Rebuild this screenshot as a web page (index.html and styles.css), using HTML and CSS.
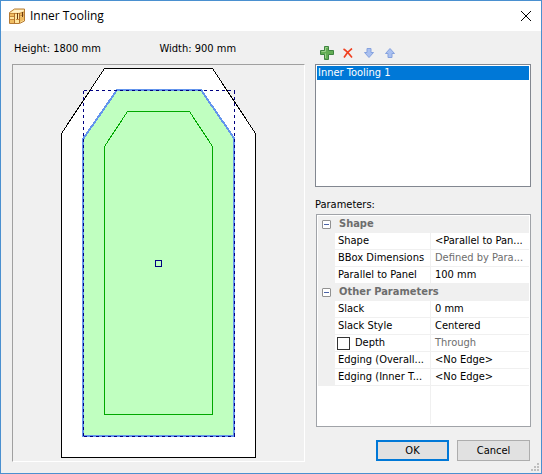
FILE: index.html
```html
<!DOCTYPE html>
<html lang="en">
<head>
<meta charset="utf-8">
<title>Inner Tooling</title>
<link rel="stylesheet" href="styles.css">
</head>
<body>
<header class="titlebar">
  <svg class="app-icon" width="16" height="16" viewBox="0 0 16 16" aria-hidden="true">
    <path d="M.5 4.500 5.500 1h10v12l-5 2.500H.5z" fill="#ffe6a0" stroke="#b57a34"/>
    <path d="M1 5h4v3H1zM1 12h4v3H1z" fill="#f0bd62"/>
    <path d="M11 5l4-1v3l-4 1zM11 9l4-1v4l-4 2z" fill="#eebb62"/>
    <path d="M2 4.500l4-2.500h9l-4 2.500z" fill="#fff0c8"/>
    <path d="M1 5.500h9l5-1.500M1 8.500h4M1 11.500h4M11 8l4-1M7 11.500h3" fill="none" stroke="#c68a3c"/>
    <path d="M5.500 5v10M10.500 5v10" stroke="#b06f2a"/>
    <path d="M8.500 5v6M13.500 4v5" stroke="#6b3c14"/>
  </svg>
  <h1 class="title">Inner Tooling</h1>
  <button class="close" type="button" aria-label="Close">
    <svg width="10" height="10" viewBox="0 0 10 10"><path d="M0 0 10 10M10 0 0 10" stroke="#000"/></svg>
  </button>
</header>
<main class="content">
  <section class="preview">
    <div class="sizes"><span>Height: 1800 mm</span><span>Width: 900 mm</span></div>
    <div class="canvas">
      <svg class="drawing" viewBox="13 65 291 396" role="img" aria-label="Panel preview">
        <g shape-rendering="crispEdges">
          <path d="M61.500 457.500V133.500L104.500 68.500H212.500L255.500 133.500V457.500Z" fill="#fff" stroke="#000"/>
          <path d="M83 436V139L117 90H201L234 138V436Z" fill="#c0ffc0" stroke="#6495ed" stroke-width="2"/>
          <path d="M104.500 414.500V146.500L127.500 111.500H189.500L212.500 146.500V414.500Z" fill="none" stroke="#00a800"/>
          <path d="M83.500 90.500H234.500M83.500 90.500V436.500M234.500 90.500V436.500M83.500 436.500H234.500" fill="none" stroke="#000080" stroke-dasharray="3 3"/>
          <rect x="155.500" y="260.500" width="6" height="6" fill="none" stroke="#000080"/>
        </g>
      </svg>
    </div>
  </section>
  <section class="side">
    <div class="toolbar">
      <button type="button" aria-label="Add">
        <svg width="14" height="14" viewBox="0 0 14 14"><path d="M4.500 .5h4v4h5v4h-5v5h-4v-5h-4v-4h4z" fill="#63ad55" stroke="#3f8440"/><path d="M5.500 12V7.500M1.500 5.500h4v-4h2" fill="none" stroke="#9ed28c"/></svg>
      </button>
      <button type="button" aria-label="Delete">
        <svg width="10" height="10" viewBox="0 0 10 10"><path d="M.5 1Q4 3 9 9.500M9 .5Q4 4 1 9.500" fill="none" stroke="#f04020" stroke-width="1.600"/></svg>
      </button>
      <button type="button" aria-label="Move down">
        <svg width="10" height="10" viewBox="0 0 10 10"><path d="M3 .5h4v4h2.500L5 9.500.5 4.500H3z" fill="#a9c0f0" stroke="#86a2de"/></svg>
      </button>
      <button type="button" aria-label="Move up">
        <svg width="10" height="10" viewBox="0 0 10 10"><path d="M3 9.500h4v-4h2.500L5 .5.5 5.500H3z" fill="#a9c0f0" stroke="#86a2de"/></svg>
      </button>
    </div>
    <select class="list" size="7" aria-label="Inner toolings"><option selected>Inner Tooling 1</option></select>
    <h2 class="caption" id="params">Parameters:</h2>
    <div class="grid">
      <table aria-labelledby="params">
        <colgroup><col class="c-gutter"><col class="c-name"><col></colgroup>
        <tbody>
          <tr class="group"><td><button class="toggle" type="button" aria-label="Collapse Shape"></button></td><th colspan="2">Shape</th></tr>
          <tr><td></td><th>Shape</th><td>&lt;Parallel to Pan...</td></tr>
          <tr><td></td><th>BBox Dimensions</th><td class="muted">Defined by Para...</td></tr>
          <tr><td></td><th>Parallel to Panel</th><td>100 mm</td></tr>
          <tr class="group"><td><button class="toggle" type="button" aria-label="Collapse Other Parameters"></button></td><th colspan="2">Other Parameters</th></tr>
          <tr><td></td><th>Slack</th><td>0 mm</td></tr>
          <tr><td></td><th>Slack Style</th><td>Centered</td></tr>
          <tr><td></td><th class="checkable"><label><input type="checkbox">Depth</label></th><td class="muted">Through</td></tr>
          <tr><td></td><th>Edging (Overall...</th><td>&lt;No Edge&gt;</td></tr>
          <tr><td></td><th>Edging (Inner T...</th><td>&lt;No Edge&gt;</td></tr>
          <tr class="rest"><td></td><th></th><td></td></tr>
        </tbody>
      </table>
    </div>
    <div class="actions">
      <button class="btn default" type="button">OK</button>
      <button class="btn" type="button">Cancel</button>
    </div>
  </section>
</main>
<svg class="grip" width="8" height="8" viewBox="0 0 8 8" aria-hidden="true"><path d="M6 0h2v2H6zM3 3h2v2H3zM6 3h2v2H6zM0 6h2v2H0zM3 6h2v2H3zM6 6h2v2H6z" fill="#bfbfbf"/></svg>
</body>
</html>
```
FILE: styles.css
```css
* { box-sizing: border-box; }

body {
  margin: 0;
  min-height: 100vh;
  display: flex;
  flex-direction: column;
  position: relative;
  border: 1px solid #4a90d0;
  background: #f0f0f0;
  color: #000;
  font: 11px/16px "DejaVu Sans Condensed", "DejaVu Sans", sans-serif;
}

button, select, input { font: inherit; color: inherit; margin: 0; }
svg { display: block; }

.titlebar {
  display: flex;
  align-items: center;
  height: 30px;
  padding: 0 10px 0 8px;
  background: #fff;
}
.title {
  flex: 1;
  margin: 0 0 0 5px;
  font: 12px/16px "Open Sans", sans-serif;
}
.close, .toolbar button {
  display: flex;
  padding: 0;
  border: 0;
  background: none;
}

.content {
  flex: 1;
  display: grid;
  grid-template-columns: 293fr 216fr;
  gap: 10px;
  padding: 0 10px 11px 11px;
}
.preview, .side {
  display: flex;
  flex-direction: column;
  min-width: 0;
}

.sizes {
  display: grid;
  grid-template-columns: 1fr 1fr;
  height: 33px;
  padding: 10px 0 0 2px;
}
.canvas {
  flex: 1;
  border: 1px solid #a0a0a0;
  border-right-color: #fff;
  border-bottom-color: #fff;
}
.drawing { width: 100%; height: 100%; }

.toolbar {
  display: flex;
  align-items: center;
  gap: 11px;
  height: 33px;
  padding: 10px 0 0 5px;
}
.toolbar button:first-child { margin-right: -2px; }

.list {
  height: 123px;
  padding: 1px;
  border: 1px solid #828790;
  border-radius: 0;
  background: #fff;
  outline: 0;
  overflow: hidden;
}
.list option {
  min-height: 14px;
  padding: 0 1px;
  line-height: 14px;
}
.list option:checked {
  background: #0078d7 linear-gradient(#0078d7, #0078d7);
  color: #fff;
}

.caption {
  height: 27px;
  margin: 0;
  padding-top: 10px;
  font: inherit;
}

.grid {
  flex: 1;
  margin-left: 1px;
  padding: 1px;
  border: 1px solid #a0a3a8;
  background: #fff;
}
table {
  width: 100%;
  table-layout: fixed;
  border-collapse: separate;
  border-spacing: 0;
}
.c-gutter { width: 17px; }
.c-name { width: 96px; }
tr { height: 17px; }
td, th {
  height: 17px;
  padding: 0 4px;
  border-bottom: 1px solid #f0f0f0;
  font-weight: normal;
  line-height: 16px;
  text-align: left;
  white-space: nowrap;
}
th { border-right: 1px solid #f0f0f0; padding: 0 3px; }
td:first-child { padding: 0; background: #f0f0f0; }
.group th {
  background: #f0f0f0;
  color: #6d6d6d;
  font-weight: bold;
  padding-left: 4px;
}
.muted { color: #6d6d6d; }
.toggle {
  display: block;
  width: 9px;
  height: 9px;
  margin-left: 4px;
  padding: 0;
  border: 1px solid #919191;
  border-radius: 1px;
  background: #fff linear-gradient(#4b63a7, #4b63a7) center / 5px 1px no-repeat;
}
th.checkable { padding-left: 2px; }
.checkable label {
  display: flex;
  align-items: center;
  gap: 5px;
}
.checkable input {
  appearance: none;
  width: 13px;
  height: 13px;
  border: 1px solid #333;
  background: #fff;
}
.rest th, .rest td, .rest td:first-child {
  height: 38px;
  border-bottom: 0;
  background: #fff;
}

.actions {
  display: flex;
  justify-content: flex-end;
  gap: 8px;
  padding: 13px 1px 1px 0;
}
.btn {
  width: 73px;
  height: 21px;
  padding: 0;
  border: 1px solid #adadad;
  background: #e1e1e1;
  line-height: 16px;
}
.btn.default { border: 2px solid #0078d7; }

.grip {
  position: absolute;
  right: 2px;
  bottom: 2px;
}
```
